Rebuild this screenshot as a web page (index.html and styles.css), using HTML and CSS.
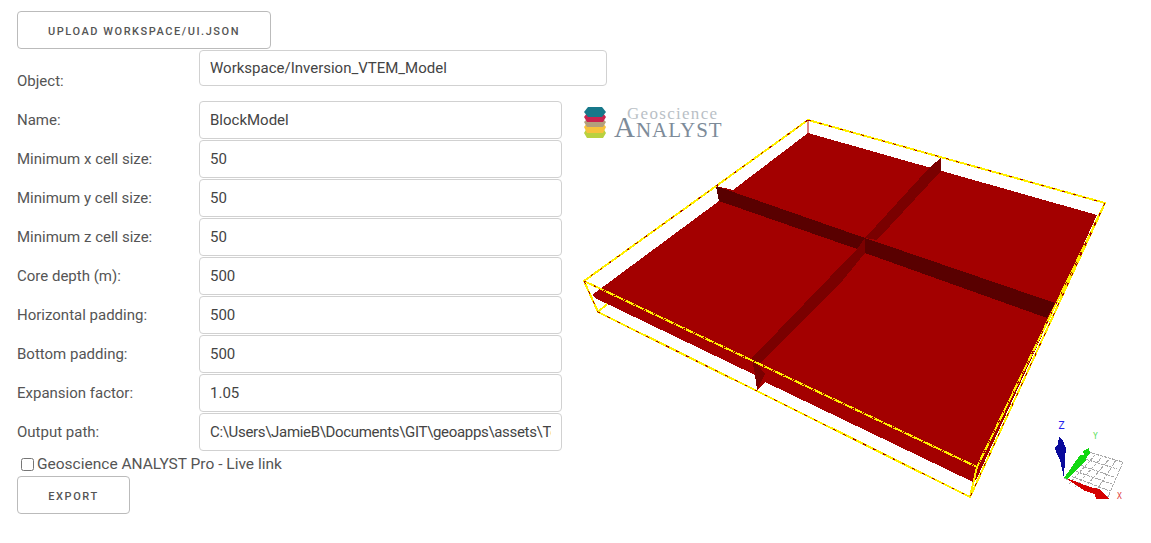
FILE: index.html
```html
<!DOCTYPE html>
<html lang="en">
<head>
    <meta charset="UTF-8">
    <title>Block model</title>
    <link rel="stylesheet" href="styles.css">
</head>
<body>
    <div class="page">
        <button class="btn btn-upload">Upload workspace/ui.json</button>

        <div class="row row-object">
            <label class="row-label">Object:</label>
            <input class="field field-wide" type="text" value="Workspace/Inversion_VTEM_Model">
        </div>

        <div class="main">
            <div class="form">
                <div class="row"><label class="row-label">Name:</label><input class="field" type="text" value="BlockModel"></div>
                <div class="row"><label class="row-label">Minimum x cell size:</label><input class="field" type="text" value="50"></div>
                <div class="row"><label class="row-label">Minimum y cell size:</label><input class="field" type="text" value="50"></div>
                <div class="row"><label class="row-label">Minimum z cell size:</label><input class="field" type="text" value="50"></div>
                <div class="row"><label class="row-label">Core depth (m):</label><input class="field" type="text" value="500"></div>
                <div class="row"><label class="row-label">Horizontal padding:</label><input class="field" type="text" value="500"></div>
                <div class="row"><label class="row-label">Bottom padding:</label><input class="field" type="text" value="500"></div>
                <div class="row"><label class="row-label">Expansion factor:</label><input class="field" type="text" value="1.05"></div>
                <div class="row"><label class="row-label">Output path:</label><input class="field field-path" type="text" value="C:\Users\JamieB\Documents\GIT\geoapps\assets\Temp"></div>
                <label class="live-link"><input class="live-check" type="checkbox">Geoscience ANALYST Pro - Live link</label>
                <button class="btn btn-export">Export</button>
            </div>

            <!-- viewBox uses page coordinates, easier to read off the scene -->
            <svg class="viewer" viewBox="570 101 581 410" width="581" height="410">
                <g class="logo">
                    <polygon fill="#b9d13f" points="587,128 603,128 606,133 603,138 587,138 584,133"/>
                    <polygon fill="#f7c23c" points="587,123 603,123 606,127 603,133 587,133 584,127"/>
                    <polygon fill="#b3a07c" points="587,119 603,119 606,122 603,127 587,127 584,122"/>
                    <polygon fill="#c9244f" points="587,113 603,113 606,117 603,122 587,122 584,117"/>
                    <polygon fill="#17788a" points="588,107 602,107 606,112 602,117 588,117 584,112"/>
                    <text class="logo-top" x="627" y="119">Geoscience</text>
                    <text class="logo-bottom" x="614" y="137"><tspan class="logo-cap">A</tspan>NALYST</text>
                </g>

                <g class="solid">
                    <polygon class="red" points="808,133 1097,215 977,478 973,482 765,382 757,390 755,375 595,298 592,295 719,201 716,186 733,190"/>
                    <polygon class="band-dark" points="716,186 865,238 865,253 857,249 719,201"/>
                    <polygon class="band-mid" points="930,167 941,158 941,171 877,240 865,238"/>
                    <polygon class="band-mid" points="865,238 865,253 843,280 758,365 765,374 757,390 755,375 752,358 857,249"/>
                    <polygon class="band-dark" points="865,238 1055,303 1047,318 865,253"/>
                </g>

                <line class="edge-back" x1="808" y1="120" x2="808" y2="134"/>
                <path class="wire-yellow" d="M808,120 L1105,203 L977,467 L584,281 Z M584,281 L598,312 L970,497 L977,467 M1105,203 L970,497 M598,312 L607,304"/>
                <path class="wire-red" d="M808,120 L1105,203 L977,467 L584,281 Z M584,281 L598,312 L970,497 M1105,203 L970,497"/>

                <g class="axes">
                    <path class="grid" d="M1064,478 L1088,452 L1123,462 L1108,497 Z M1069,484 L1096,454 M1075,487 L1103,456 M1083,490 L1110,458 M1095,493 L1116,460 M1082,458 L1117,469 M1077,464 L1114,477 M1072,470 L1112,484 M1068,475 L1110,491"/>
                    <polygon class="axis-red" points="1064,477 1090,487 1099,489 1110,499 1096,499 1095,494 1085,491"/>
                    <polygon class="axis-green" points="1064,478 1080,455 1084,455 1083,451 1089,448 1090,454 1087,456 1086,460 1067,479"/>
                    <polygon class="axis-blue" points="1064,478 1060,460 1056,452 1055,448 1058,444 1059,437 1062,439 1066,448 1065,458"/>
                    <text class="axis-z" x="1058" y="429">Z</text>
                    <text class="axis-y" x="1093" y="439">Y</text>
                    <text class="axis-x" x="1117" y="499">X</text>
                </g>
            </svg>
        </div>
    </div>
</body>
</html>
```

FILE: styles.css
```css
* {
    box-sizing: border-box;
}

body {
    margin: 0;
    font-family: 'Roboto', sans-serif;
    font-size: 15px;
    color: #555;
    background: #fff;
}

.page {
    padding: 11px 0 0 17px;
}

.btn {
    display: block;
    height: 38px;
    padding: 2px 0 0;
    background: #fff;
    border: 1px solid #bbb;
    border-radius: 4px;
    font-family: 'Roboto', sans-serif;
    font-size: 11px;
    font-weight: 500;
    letter-spacing: 1.55px;
    text-transform: uppercase;
    color: #555;
}

.btn-upload {
    width: 254px;
}

.btn-export {
    width: 113px;
    margin-top: 2px;
}

.row {
    display: flex;
    height: 38px;
    margin-bottom: 1px;
    align-items: center;
}

.row-label {
    width: 182px;
    flex: none;
}

.row-object {
    height: 50px;
    margin: 1px 0 1px;
    align-items: flex-start;
}

.row-object .row-label {
    padding-top: 22px;
}

.field {
    width: 363px;
    height: 38px;
    padding: 6px 10px;
    background: #fff;
    border: 1px solid #d1d1d1;
    border-radius: 4px;
    font-family: 'Roboto', sans-serif;
    font-size: 15px;
    color: #444;
}

.field-wide {
    width: 408px;
    height: 36px;
}

.field-path {
    letter-spacing: -.32px;
}

.main {
    display: flex;
}

.form {
    width: 553px;
    flex: none;
}

.live-link {
    display: flex;
    align-items: center;
    height: 20px;
    margin-top: 3px;
    padding-left: 4px;
    font-size: 15.5px;
}

.live-check {
    width: 13px;
    height: 13px;
    margin: 0 3px 0 0;
}

.viewer {
    display: block;
    flex: none;
}

.logo-top {
    font-family: 'Liberation Serif', serif;
    font-size: 17px;
    letter-spacing: 1.3px;
    fill: #b9bfc6;
}

.logo-bottom {
    font-family: 'Liberation Serif', serif;
    font-size: 21px;
    letter-spacing: 1px;
    fill: #7d8b99;
}

.logo-cap {
    font-size: 29px;
}

.solid {
    shape-rendering: crispEdges;
}

.red {
    fill: #a30000;
}

.band-dark {
    fill: #590000;
}

.band-mid {
    fill: #7a0000;
}

.edge-back {
    stroke: #c00000;
    stroke-width: 1;
}

.wire-yellow,
.wire-red {
    fill: none;
    shape-rendering: crispEdges;
}

.wire-yellow {
    stroke: #ffee00;
    stroke-width: 2;
}

.wire-red {
    stroke: #a30000;
    stroke-width: 1;
    stroke-dasharray: 3 8;
}

.grid {
    fill: none;
    stroke: #a8a8a8;
    stroke-width: 1;
    stroke-dasharray: 3 1;
    shape-rendering: crispEdges;
}

.axes polygon {
    shape-rendering: crispEdges;
}

.axis-red {
    fill: #d40000;
}

.axis-green {
    fill: #12d812;
}

.axis-blue {
    fill: #0a0a9c;
}

.axes text {
    font-family: 'DejaVu Sans Mono', monospace;
}

.axis-z {
    font-size: 11px;
    fill: #2222ee;
}

.axis-y {
    font-size: 8px;
    fill: #55dd55;
}

.axis-x {
    font-size: 8px;
    fill: #dd3333;
}
```
